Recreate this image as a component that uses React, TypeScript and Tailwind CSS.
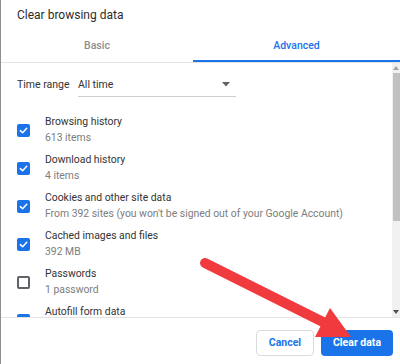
import React from "react";

function Check({ checked }: { checked: boolean }) {
  if (checked) {
    return (
      <div className="w-[13px] h-[13px] rounded-[2px] bg-[#1a73e8] flex items-center justify-center">
        <svg width="9" height="9" viewBox="0 0 10 10">
          <path d="M1.5 5.2 L4 7.5 L8.6 2.6" fill="none" stroke="#fff" strokeWidth="1.7" strokeLinecap="round" strokeLinejoin="round" />
        </svg>
      </div>
    );
  }
  return <div className="w-[13px] h-[13px] rounded-[2px] border-2 border-[#5f6368]" />;
}

const rows = [
  { label: "Browsing history", sub: "613 items", checked: true },
  { label: "Download history", sub: "4 items", checked: true },
  { label: "Cookies and other site data", sub: "From 392 sites (you won't be signed out of your Google Account)", checked: true },
  { label: "Cached images and files", sub: "392 MB", checked: true },
  { label: "Passwords", sub: "1 password", checked: false },
  { label: "Autofill form data", sub: "", checked: true },
];

export default function App() {
  return (
    <div
      className="relative w-[400px] h-[364px] bg-white border-l border-[#8f8f8f] flex flex-col overflow-hidden"
      style={{ fontFamily: "Roboto, 'Noto Sans', Arial, sans-serif" }}
    >
      <div className="h-[30px] pl-[16px] flex items-center text-[12px] text-[#2b2b2b]">Clear browsing data</div>

      <div className="h-[33px] flex border-b border-[#e3e3e3]">
        <div className="w-[192px] flex items-center justify-center text-[10.5px] font-medium text-[#8d8d8d]">Basic</div>
        <div className="flex-1 flex items-center justify-center text-[10.5px] font-medium text-[#1a73e8] border-b-2 border-[#1a73e8] pt-[2px]">
          Advanced
        </div>
      </div>

      <div className="flex-1 flex min-h-0">
        <div className="flex-1 flex flex-col pl-[16px] overflow-hidden">
          <div className="mt-[10px] h-[24px] flex items-center text-[10.5px] text-[#333]">
            <span className="w-[61px]">Time range</span>
            <div className="w-[158px] h-[24px] flex items-center justify-between border-b border-[#cfcfcf] pr-[6px]">
              <span>All time</span>
              <svg width="8" height="5" viewBox="0 0 8 5">
                <path d="M0 0 L8 0 L4 4.5 Z" fill="#5f6368" />
              </svg>
            </div>
          </div>
          <div className="mt-[14px] flex flex-col">
            {rows.map((r) => (
              <div key={r.label} className="h-[38px] shrink-0 flex items-center">
                <div className="w-[28px] flex items-center pt-[1px]">
                  <Check checked={r.checked} />
                </div>
                <div className="flex flex-col text-[10.4px] leading-[16px]">
                  <span className="text-[#333]">{r.label}</span>
                  <span className="text-[#7d7d7d]">{r.sub || "\u00a0"}</span>
                </div>
              </div>
            ))}
          </div>
        </div>
        <div className="w-[8px] bg-[#f1f1f1] flex flex-col items-center">
          <div className="h-[10px] flex items-center justify-center">
            <svg width="6" height="4" viewBox="0 0 6 4"><path d="M0 4 L6 4 L3 0 Z" fill="#a3a3a3" /></svg>
          </div>
          <div className="w-[7px] h-[148px] bg-[#c1c1c1]" />
          <div className="flex-1" />
          <div className="h-[10px] flex items-center justify-center">
            <svg width="6" height="4" viewBox="0 0 6 4"><path d="M0 0 L6 0 L3 4 Z" fill="#505050" /></svg>
          </div>
        </div>
      </div>

      <div className="h-[47px] shrink-0 border-t border-[#e3e3e3] flex justify-end items-start pt-[12px] pr-[7px] gap-[7px]">
        <button className="w-[58px] h-[26px] rounded-[4px] border border-[#dadce0] bg-white text-[10.5px] font-bold text-[#1a73e8]">
          Cancel
        </button>
        <button className="w-[72px] h-[26px] rounded-[4px] bg-[#1a73e8] text-[10.5px] font-bold text-white">
          Clear data
        </button>
      </div>

      <svg className="absolute left-0 top-0 pointer-events-none" width="400" height="364" viewBox="0 0 400 364">
        <line x1="204" y1="263" x2="324" y2="323" stroke="#f03a3e" strokeWidth="10" strokeLinecap="round" />
        <polygon points="329,308 314,337 350,337" fill="#f03a3e" />
      </svg>
    </div>
  );
}
